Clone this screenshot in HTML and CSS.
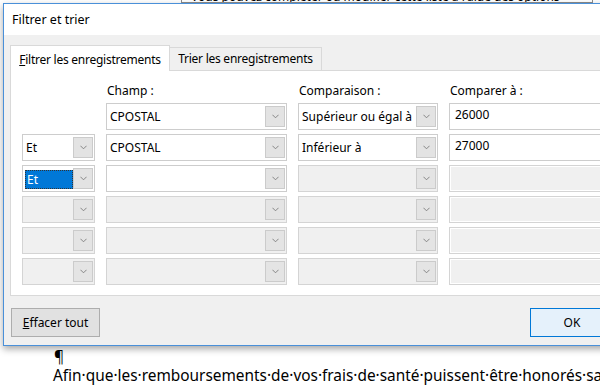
FILE: index.html
```html
<!DOCTYPE html>
<html lang="fr">
<head>
    <meta charset="UTF-8">
    <title>Filtrer et trier</title>
    <link rel="stylesheet" href="styles.css">
</head>
<body>
    <div class="doc-top">
        <div class="note"><span>Vous pouvez compléter ou modifier cette liste à l'aide des options</span></div>
    </div>

    <div class="dialog">
        <div class="titlebar">Filtrer et trier</div>
        <div class="dialog-body">
            <div class="tabs">
                <div class="tab active"><u>F</u>iltrer les enregistrements</div>
                <div class="tab">Trier les enregistrements</div>
            </div>
            <div class="panel">
                <div class="grid">
                    <div></div>
                    <div class="head">Champ :</div>
                    <div class="head">Comparaison :</div>
                    <div class="head">Comparer à :</div>

                    <!-- row 1 -->
                    <div></div>
                    <div class="combo"><span class="val">CPOSTAL</span><span class="btn"><svg viewBox="0 0 8 5"><polyline points="0.5,0.5 4,4 7.5,0.5"/></svg></span></div>
                    <div class="combo"><span class="val">Supérieur ou égal à</span><span class="btn"><svg viewBox="0 0 8 5"><polyline points="0.5,0.5 4,4 7.5,0.5"/></svg></span></div>
                    <div class="field">26000</div>

                    <!-- row 2 -->
                    <div class="combo"><span class="val">Et</span><span class="btn"><svg viewBox="0 0 8 5"><polyline points="0.5,0.5 4,4 7.5,0.5"/></svg></span></div>
                    <div class="combo"><span class="val">CPOSTAL</span><span class="btn"><svg viewBox="0 0 8 5"><polyline points="0.5,0.5 4,4 7.5,0.5"/></svg></span></div>
                    <div class="combo"><span class="val">Inférieur à</span><span class="btn"><svg viewBox="0 0 8 5"><polyline points="0.5,0.5 4,4 7.5,0.5"/></svg></span></div>
                    <div class="field">27000</div>

                    <!-- row 3 -->
                    <div class="combo"><span class="val"><span class="selected">Et</span></span><span class="btn"><svg viewBox="0 0 8 5"><polyline points="0.5,0.5 4,4 7.5,0.5"/></svg></span></div>
                    <div class="combo"><span class="val"></span><span class="btn"><svg viewBox="0 0 8 5"><polyline points="0.5,0.5 4,4 7.5,0.5"/></svg></span></div>
                    <div class="combo off"><span class="val"></span><span class="btn"><svg viewBox="0 0 8 5"><polyline points="0.5,0.5 4,4 7.5,0.5"/></svg></span></div>
                    <div class="field off"></div>

                    <!-- row 4 -->
                    <div class="combo off"><span class="val"></span><span class="btn"><svg viewBox="0 0 8 5"><polyline points="0.5,0.5 4,4 7.5,0.5"/></svg></span></div>
                    <div class="combo off"><span class="val"></span><span class="btn"><svg viewBox="0 0 8 5"><polyline points="0.5,0.5 4,4 7.5,0.5"/></svg></span></div>
                    <div class="combo off"><span class="val"></span><span class="btn"><svg viewBox="0 0 8 5"><polyline points="0.5,0.5 4,4 7.5,0.5"/></svg></span></div>
                    <div class="field off"></div>

                    <!-- row 5 -->
                    <div class="combo off"><span class="val"></span><span class="btn"><svg viewBox="0 0 8 5"><polyline points="0.5,0.5 4,4 7.5,0.5"/></svg></span></div>
                    <div class="combo off"><span class="val"></span><span class="btn"><svg viewBox="0 0 8 5"><polyline points="0.5,0.5 4,4 7.5,0.5"/></svg></span></div>
                    <div class="combo off"><span class="val"></span><span class="btn"><svg viewBox="0 0 8 5"><polyline points="0.5,0.5 4,4 7.5,0.5"/></svg></span></div>
                    <div class="field off"></div>

                    <!-- row 6 -->
                    <div class="combo off"><span class="val"></span><span class="btn"><svg viewBox="0 0 8 5"><polyline points="0.5,0.5 4,4 7.5,0.5"/></svg></span></div>
                    <div class="combo off"><span class="val"></span><span class="btn"><svg viewBox="0 0 8 5"><polyline points="0.5,0.5 4,4 7.5,0.5"/></svg></span></div>
                    <div class="combo off"><span class="val"></span><span class="btn"><svg viewBox="0 0 8 5"><polyline points="0.5,0.5 4,4 7.5,0.5"/></svg></span></div>
                    <div class="field off"></div>
                </div>
            </div>
            <div class="footer">
                <button class="button"><u>E</u>ffacer tout</button>
                <button class="button ok">OK</button>
            </div>
        </div>
    </div>

    <div class="doc">
        <p class="pilcrow">¶</p>
        <p>Afin·que·les·remboursements·de·vos·frais·de·santé·puissent·être·honorés·sans·délai</p>
    </div>
</body>
</html>
```

FILE: styles.css
```css
body {
    margin: 0;
    width: 600px;
    height: 385px;
    overflow: hidden;
    background: #fff;
    font-family: "Noto Sans", "Open Sans", sans-serif;
    color: #000;
}

.doc-top {
    height: 3px;
}
.note {
    margin-left: 181px;
    width: 410px;
    height: 2px;
    overflow: hidden;
    border: 1px solid #8c8c8c;
    border-top: none;
    font-size: 12px;
    line-height: 14px;
}
.note span {
    display: block;
    margin-top: -10px;
    padding-left: 9px;
    white-space: nowrap;
}

.dialog {
    margin-left: 3px;
    width: 640px;
    height: 341px;
    border: 1px solid #4a90d9;
    border-right: none;
    background: #f0f0f0;
    box-shadow: 0 3px 7px rgba(0, 0, 0, 0.35);
    position: relative;
    z-index: 1;
}

.titlebar {
    height: 31px;
    background: #fff;
    font-size: 12.5px;
    line-height: 31px;
    padding-left: 8px;
}

.dialog-body {
    padding: 9px 0 0 6px;
    font-size: 12px;
}

.tabs {
    display: flex;
    align-items: flex-end;
    height: 26px;
}
.tab {
    box-sizing: border-box;
    height: 23px;
    line-height: 22px;
    border: 1px solid #d9d9d9;
    border-bottom: none;
    background: #f0f0f0;
    color: #000;
    white-space: nowrap;
    letter-spacing: -0.25px;
    text-align: center;
}
.tab.active {
    height: 26px;
    line-height: 27px;
    background: #fff;
    width: 160px;
    position: relative;
    top: 1px;
}
.tab + .tab {
    border-left: none;
    width: 152px;
}

.panel {
    height: 226px;
    background: #fff;
    border: 1px solid #d9d9d9;
    padding: 12px 0 0 11px;
    box-sizing: border-box;
}

.grid {
    display: grid;
    grid-template-columns: 73px 181px 140px 200px;
    grid-template-rows: 16px repeat(6, 27px);
    column-gap: 11px;
    row-gap: 4px;
}
.grid .head {
    line-height: 16px;
    padding-left: 1px;
}

.combo {
    display: flex;
    border: 1px solid #cdcdcd;
    background: #fff;
    box-shadow: inset 0 0 0 1px #fff;
}
.combo .val {
    flex: 1;
    line-height: 25px;
    padding-left: 3px;
    white-space: nowrap;
    overflow: hidden;
}
.combo .btn {
    width: 18px;
    margin: 2px 1px 2px 0;
    background: #e3e3e3;
    border: 1px solid #cbcbcb;
    display: flex;
    align-items: center;
    justify-content: center;
}
.combo .btn svg {
    width: 7px;
    height: 5px;
    fill: none;
    stroke: #7a7a7a;
    stroke-width: 1;
}
.combo.off {
    background: #f0f0f0;
    border-color: #d4d4d4;
    box-shadow: none;
}
.combo.off .btn {
    background: #e4e4e4;
}

.selected {
    display: block;
    margin: 4px 0 2px -1px;
    height: 19px;
    line-height: 19px;
    padding-left: 2px;
    background: #0078d7;
    color: #fff;
    outline: 1px dotted #333;
    outline-offset: -1px;
}

.field {
    border: 1px solid #cdcdcd;
    background: #fff;
    padding: 2px 0 0 5px;
    line-height: 18px;
}
.field.off {
    background: #f0f0f0;
    box-shadow: inset 0 0 0 1px #fff;
    border-color: #d4d4d4;
}

.footer {
    display: flex;
    justify-content: space-between;
    padding-top: 12px;
}
.button {
    font-family: inherit;
    font-size: 12px;
    height: 29px;
    width: 89px;
    margin-left: 1px;
    background: #e1e1e1;
    border: 1px solid #adadad;
    color: #000;
    padding: 0;
}
.button.ok {
    width: 84px;
    margin-left: 0;
    margin-right: 30px;
    background: #e5f1fb;
    border-color: #0078d7;
}

.doc {
    padding-left: 53px;
    font-size: 15.4px;
    line-height: 19px;
}
.doc p {
    margin: 0;
    white-space: nowrap;
}
.doc .pilcrow {
    margin-top: 1px;
    padding-left: 1px;
}
```
